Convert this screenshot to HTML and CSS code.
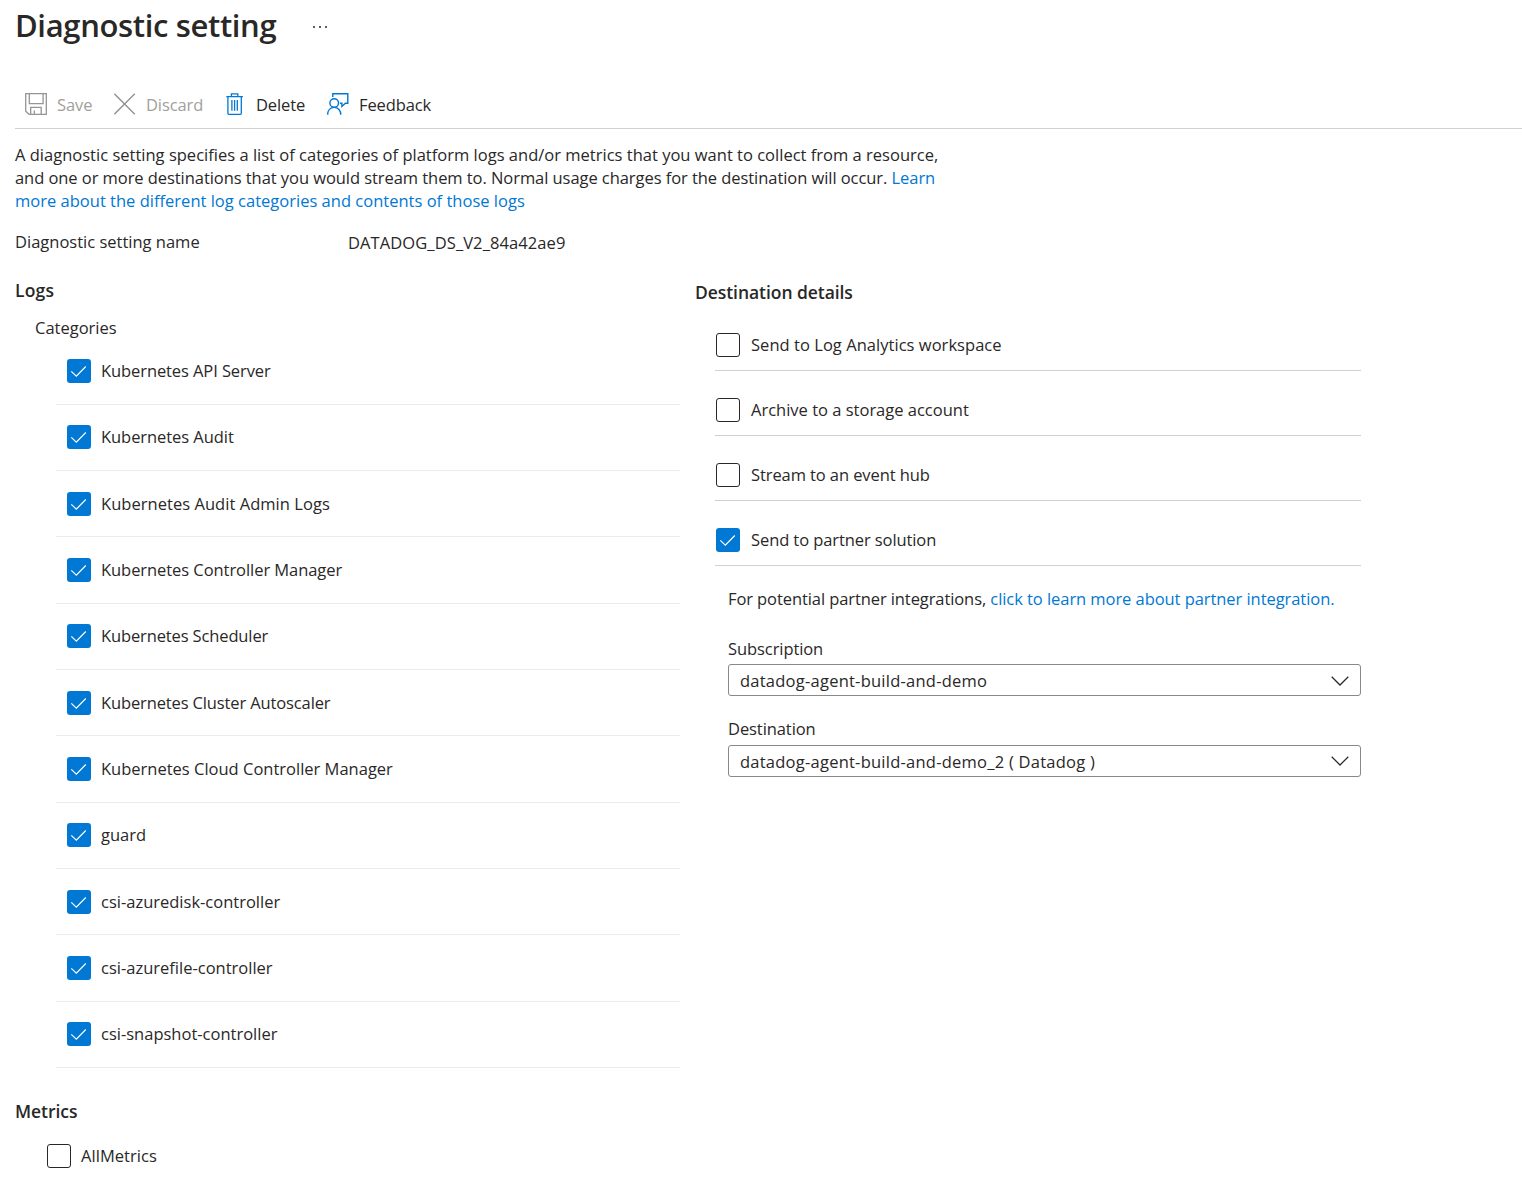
FILE: index.html
```
<!DOCTYPE html>
<html lang="en">
<head>
<meta charset="utf-8">
<title>Diagnostic setting</title>
<link rel="stylesheet" href="styles.css">
</head>
<body>
<svg width="0" height="0" class="defs" aria-hidden="true">
  <symbol id="tick" viewBox="0 0 24 24"><path d="M4.3 12.4L9.3 17.1L18.8 7.5" fill="none" stroke="#fff" stroke-width="1.2"/></symbol>
  <symbol id="chevron" viewBox="0 0 18 10"><path d="M.7 .7L9 9L17.3 .7" fill="none" stroke="#292827" stroke-width="1.25"/></symbol>
</svg>
<header class="title-bar">
  <h1>Diagnostic setting</h1>
  <span class="more"><i></i><i></i><i></i></span>
</header>
<nav class="toolbar">
  <span class="command save disabled">
    <svg width="22" height="22" viewBox="0 0 22 22" fill="none" stroke="#979593" stroke-width="1.3"><path d="M.7 .7H21.3V21.3H4L.7 18.200Z"/><path d="M4.300 .7V10.700H18.100V.7M5.700 21.300V14.300H16.200V21.300M9.300 21.300V17.600"/></svg>
    <span>Save</span>
  </span>
  <span class="command discard disabled">
    <svg width="22" height="22" viewBox="0 0 22 22" fill="none" stroke="#979593" stroke-width="1.4"><path d="M.4 .8L20.800 21.200M20.800 .8L.4 21.200"/></svg>
    <span>Discard</span>
  </span>
  <span class="command delete">
    <svg width="18" height="22" viewBox="0 0 18 22" fill="none" stroke="#0078d4" stroke-width="1.3"><path d="M.3 3.600H16.900M5.400 3.400V.8H11.800V3.400M1.900 3.600V20.200Q1.900 21.300 3 21.300H14.200Q15.300 21.300 15.300 20.200V3.600M5.900 7V17.800M8.600 7V17.800M11.300 7V17.800"/></svg>
    <span>Delete</span>
  </span>
  <span class="command feedback">
    <svg width="22" height="22" viewBox="0 0 22 22" fill="none" stroke="#0078d4" stroke-width="1.4"><path d="M5.800 4V.8H20.800V10.200H18.400L14.900 13.400V10.200H12.900"/><circle cx="7.200" cy="10" r="4.300"/><path d="M.7 21.800C.7 17.500 3.300 14.400 7.200 14.400C11.100 14.400 13.800 17.500 13.800 21.800"/></svg>
    <span>Feedback</span>
  </span>
</nav>
<main>
  <p class="intro"><span class="l1">A diagnostic setting specifies a list of categories of platform logs and/or metrics that you want to collect from a resource,</span><br><span class="l2">and one or more destinations that you would stream them to. Normal usage charges for the destination will occur. <a>Learn</a></span><br><a class="l3">more about the different log categories and contents of those logs</a></p>
  <div class="name-row"><span class="name-label">Diagnostic setting name</span><span class="name-value">DATADOG_DS_V2_84a42ae9</span></div>
  <div class="columns">
    <section class="sources">
      <h2 class="logs-title">Logs</h2>
      <h3>Categories</h3>
      <ul class="logs">
        <li><svg class="box on"><use href="#tick"/></svg><span class="tight">Kubernetes API Server</span></li>
        <li><svg class="box on"><use href="#tick"/></svg><span class="snug">Kubernetes Audit</span></li>
        <li><svg class="box on"><use href="#tick"/></svg><span class="loose">Kubernetes Audit Admin Logs</span></li>
        <li><svg class="box on"><use href="#tick"/></svg><span class="snug">Kubernetes Controller Manager</span></li>
        <li><svg class="box on"><use href="#tick"/></svg><span class="tighter">Kubernetes Scheduler</span></li>
        <li><svg class="box on"><use href="#tick"/></svg><span class="tighter">Kubernetes Cluster Autoscaler</span></li>
        <li><svg class="box on"><use href="#tick"/></svg><span>Kubernetes Cloud Controller Manager</span></li>
        <li><svg class="box on"><use href="#tick"/></svg><span>guard</span></li>
        <li><svg class="box on"><use href="#tick"/></svg><span>csi-azuredisk-controller</span></li>
        <li><svg class="box on"><use href="#tick"/></svg><span>csi-azurefile-controller</span></li>
        <li><svg class="box on"><use href="#tick"/></svg><span>csi-snapshot-controller</span></li>
      </ul>
      <h2 class="metrics-title">Metrics</h2>
      <div class="metric"><span class="box"></span><span class="loose">AllMetrics</span></div>
    </section>
    <section class="destinations">
      <h2 class="dest-title">Destination details</h2>
      <ul class="targets">
        <li><span class="box"></span><span class="loose">Send to Log Analytics workspace</span></li>
        <li><span class="box"></span><span>Archive to a storage account</span></li>
        <li><span class="box"></span><span class="tight">Stream to an event hub</span></li>
        <li><svg class="box on"><use href="#tick"/></svg><span class="tight">Send to partner solution</span></li>
      </ul>
      <div class="partner">
        <p class="hint"><span class="tight">For potential partner integrations, </span><a class="snug">click to learn more about partner integration.</a></p>
        <div class="field-label sub">Subscription</div>
        <div class="select first"><span>datadog-agent-build-and-demo</span><svg width="18" height="10"><use href="#chevron"/></svg></div>
        <div class="field-label dst">Destination</div>
        <div class="select"><span>datadog-agent-build-and-demo_2 ( Datadog )</span><svg width="18" height="10"><use href="#chevron"/></svg></div>
      </div>
    </section>
  </div>
</main>
</body>
</html>
```
FILE: styles.css
```
* { box-sizing: border-box; }
body {
  margin: 0;
  padding-left: 15px;
  height: 1186px;
  overflow: hidden;
  background: #fff;
  color: #292827;
  font: 16.5px/23px "Segoe UI", "Open Sans", sans-serif;
  white-space: nowrap;
}
.defs { position: absolute; }
h1, h2, h3, p, ul { margin: 0; padding: 0; }
ul { list-style: none; }
a { color: #0078d4; }
.snug { letter-spacing: -.06px; }
.tight { letter-spacing: -.09px; }
.tighter { letter-spacing: -.13px; }
.loose { letter-spacing: .04px; }
.title-bar { display: flex; height: 82px; }
h1 { width: 298px; font-size: 31px; line-height: 50px; font-weight: 600; letter-spacing: -.35px; }
.more { display: flex; gap: 4px; padding-top: 26px; }
.more i { width: 2px; height: 2px; background: #605e5c; }
.toolbar { display: flex; height: 47px; border-bottom: 1px solid #d2d0ce; }
.command { display: flex; align-items: center; height: 44px; }
.command svg { flex: none; }
.command span { padding-top: 1px; letter-spacing: -.1px; }
.save { width: 89px; padding-left: 10px; gap: 10px; }
.discard { width: 122px; padding-left: 10px; gap: 10px; }
.delete { width: 101px; gap: 12px; }
.feedback { gap: 10px; }
.disabled { color: #a19f9d; }
.intro { padding-top: 14px; }
.l1, .l3 { letter-spacing: .01px; }
.l2 { letter-spacing: -.06px; }
.name-row { display: flex; margin-top: 18px; height: 23px; }
.name-label { width: 333px; }
.name-value { padding-top: 1px; letter-spacing: .09px; }
.columns { display: flex; padding-top: 25px; }
.sources { width: 680px; }
h2 { font-size: 17.5px; font-weight: 600; line-height: 24px; }
.logs-title { letter-spacing: .2px; }
.dest-title, .metrics-title { letter-spacing: -.06px; }
h3 { margin-top: 14px; padding-left: 20px; font-size: inherit; font-weight: 400; line-height: 23px; }
.logs { margin: -.5px 0 0 41px; width: 624px; }
.logs li { display: flex; gap: 10px; height: 66.330px; padding: 20.500px 0 0 11px; border-bottom: 1px solid #edebe9; line-height: 24px; }
.box { flex: none; width: 24px; height: 24px; border: 1px solid #292827; border-radius: 3px; }
.box.on { border: 0; background: #0078d4; }
.metrics-title { margin-top: 31px; }
.metric { display: flex; gap: 10px; padding: 20.500px 0 0 32px; line-height: 24px; }
.destinations { width: 666px; padding-top: 2px; }
.targets { padding: 2px 0 0 20px; }
.targets li { display: flex; gap: 11px; height: 65px; padding: 27px 0 0 1px; border-bottom: 1px solid #d2d0ce; line-height: 24px; }
.partner { padding: 21px 0 0 33px; }
.field-label.sub { margin-top: 27px; letter-spacing: -.08px; }
.field-label.dst { margin-top: 21px; letter-spacing: -.08px; }
.select { display: flex; justify-content: space-between; align-items: center; height: 32px; margin-top: 5px; padding: 0 11px; border: 1px solid #8a8886; border-radius: 3px; letter-spacing: .24px; }
.select.first { margin-top: 4px; }
.select.first svg { margin-top: 1px; }
```
